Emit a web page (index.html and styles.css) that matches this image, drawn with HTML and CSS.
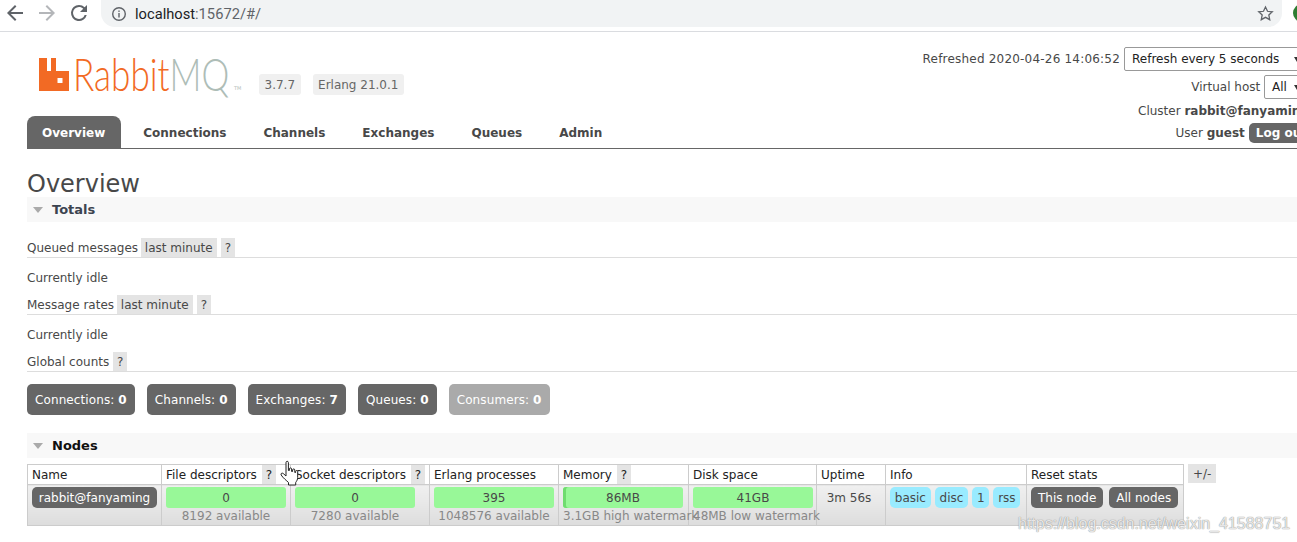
FILE: index.html
```html
<!DOCTYPE html>
<html lang="en">
<head>
  <meta charset="UTF-8">
  <title>RabbitMQ Management</title>
  <link rel="stylesheet" href="styles.css">
</head>
<body>
  <div class="browser-bar">
    <svg class="nav-icon" viewBox="0 0 24 24"><path fill="#5f6368" d="M20 11H7.83l5.59-5.59L12 4l-8 8 8 8 1.41-1.41L7.83 13H20z"/></svg>
    <svg class="nav-icon" viewBox="0 0 24 24"><path fill="#b4b6b9" d="M12 4l-1.41 1.41L16.17 11H4v2h12.17l-5.58 5.59L12 20l8-8z"/></svg>
    <svg class="nav-icon" viewBox="0 0 24 24"><path fill="#5f6368" d="M17.65 6.35A7.96 7.96 0 0 0 12 4a8 8 0 1 0 7.73 10h-2.08A6 6 0 1 1 12 6c1.66 0 3.14.69 4.22 1.78L13 11h7V4z"/></svg>
    <div class="url-pill">
      <svg class="info-icon" viewBox="0 0 16 16"><circle cx="8" cy="8" r="6.3" fill="none" stroke="#5f6368" stroke-width="1.4"/><rect x="7.3" y="7" width="1.4" height="4.5" fill="#5f6368"/><rect x="7.3" y="4.5" width="1.4" height="1.4" fill="#5f6368"/></svg>
      <span class="url-host">localhost</span><span class="url-rest">:15672/#/</span>
      <svg class="star-icon" viewBox="0 0 16 16"><path fill="none" stroke="#5f6368" stroke-width="1.2" d="M8 1.8l1.9 4.1 4.5.5-3.3 3 .9 4.4L8 11.6l-4 2.2.9-4.4-3.3-3 4.5-.5z"/></svg>
    </div>
    <div class="avatar"></div>
  </div>

  <div class="page">
    <div class="header">
      <div class="logo-row">
        <div class="logo">
          <svg class="logo-mark" viewBox="0 0 30 33"><path fill="#f26a24" fill-rule="evenodd" d="M0 0h8v13h4V0h5v13h13v20H0zM18.500 20v5h5v-5z"/></svg>
          <div class="logo-text"><span class="logo-rabbit">Rabbit</span><span class="logo-mq">MQ</span></div>
          <span class="logo-tm">TM</span>
        </div>
        <span class="version">3.7.7</span>
        <span class="version">Erlang 21.0.1</span>
      </div>
      <div class="login">
        <div class="login-row login-refresh">Refreshed 2020-04-26 14:06:52 <div class="fake-select refresh-select">Refresh every 5 seconds<i class="select-arrow"></i></div></div>
        <div class="login-row login-vhost">Virtual host <div class="fake-select vhost-select">All<i class="select-arrow"></i></div></div>
        <div class="login-row login-cluster">Cluster <b>rabbit@fanyaming</b></div>
        <div class="login-row login-user">User <b>guest</b> <span class="logout">Log out</span></div>
      </div>
    </div>

    <ul class="tabs">
      <li class="tab active">Overview</li>
      <li class="tab">Connections</li>
      <li class="tab">Channels</li>
      <li class="tab">Exchanges</li>
      <li class="tab">Queues</li>
      <li class="tab">Admin</li>
    </ul>

    <h1>Overview</h1>

    <div class="section-head totals-head"><i class="triangle"></i>Totals</div>

    <div class="sub-head first">Queued messages <span class="tag">last minute</span><span class="tag help">?</span></div>
    <p class="idle">Currently idle</p>
    <div class="sub-head">Message rates <span class="tag">last minute</span><span class="tag help">?</span></div>
    <p class="idle">Currently idle</p>
    <div class="sub-head">Global counts <span class="tag help">?</span></div>

    <div class="counts">
      <div class="count">Connections: <b>0</b></div>
      <div class="count">Channels: <b>0</b></div>
      <div class="count">Exchanges: <b>7</b></div>
      <div class="count">Queues: <b>0</b></div>
      <div class="count faded">Consumers: <b>0</b></div>
    </div>

    <div class="section-head nodes-head"><i class="triangle"></i>Nodes</div>

    <div class="nodes">
      <table>
        <colgroup>
          <col class="c-name"><col class="c-file"><col class="c-socket"><col class="c-erl"><col class="c-mem"><col class="c-disk"><col class="c-up"><col class="c-info"><col class="c-reset">
        </colgroup>
        <thead>
          <tr>
            <th>Name</th>
            <th>File descriptors <span class="tag help">?</span></th>
            <th>Socket descriptors <span class="tag help">?</span></th>
            <th>Erlang processes</th>
            <th>Memory <span class="tag help">?</span></th>
            <th>Disk space</th>
            <th>Uptime</th>
            <th>Info</th>
            <th>Reset stats</th>
          </tr>
        </thead>
        <tbody>
          <tr>
            <td><span class="pill node-name">rabbit@fanyaming</span></td>
            <td><div class="bar">0</div><div class="sub">8192 available</div></td>
            <td><div class="bar">0</div><div class="sub">7280 available</div></td>
            <td><div class="bar">395</div><div class="sub">1048576 available</div></td>
            <td><div class="bar bar-mem">86MB</div><div class="sub left">3.1GB high watermark</div></td>
            <td><div class="bar">41GB</div><div class="sub left">48MB low watermark</div></td>
            <td class="uptime">3m 56s</td>
            <td><div class="info-tags"><span class="info-tag">basic</span><span class="info-tag">disc</span><span class="info-tag">1</span><span class="info-tag">rss</span></div></td>
            <td><div class="reset-btns"><span class="pill">This node</span><span class="pill">All nodes</span></div></td>
          </tr>
        </tbody>
      </table>
      <span class="tag plus-minus">+/-</span>
    </div>
  </div>

  <svg class="hand-cursor" viewBox="0 0 20 26"><path fill="#fff" stroke="#222" stroke-width="1" stroke-linejoin="round" d="M6 2c0-1.600 2.400-1.600 2.400 0v8l1 0V8.500c0-1.400 2.200-1.400 2.200 0V11l1 0V9.500c0-1.400 2.200-1.400 2.200 0V12l.8 0v-1c0-1.300 2.100-1.300 2.100 0v6c0 2-1 3.500-2 5v2.500H8.500V22C6.500 20 3 17.500 1.200 14.500c-.8-1.400.8-2.500 2-1.500L6 15.500z"/></svg>
  <div class="watermark">https://blog.csdn.net/weixin_41588751</div>
</body>
</html>
```

FILE: styles.css
```css
html, body {
  margin: 0;
  height: 542px;
  overflow: hidden;
}

body {
  position: relative;
  background: #fff;
  color: #484848;
  font-family: "DejaVu Sans", Verdana, sans-serif;
  font-size: 12px;
}

/* browser chrome */
.browser-bar {
  display: flex;
  align-items: flex-start;
  height: 31px;
  border-bottom: 1px solid #dadce0;
  padding-left: 3px;
}

.nav-icon {
  width: 24px;
  height: 24px;
  margin: 1px 8px 0 0;
}

.url-pill {
  display: flex;
  align-items: center;
  flex: 1;
  height: 27px;
  margin-left: 2px;
  padding: 0 8px 0 10px;
  background: #f1f3f4;
  border-radius: 0 0 14px 14px;
  font-family: "Roboto", sans-serif;
  font-size: 14.7px;
}

.info-icon { width: 16px; height: 16px; margin-right: 8px; }
.url-host { color: #202124; }
.url-rest { color: #5f6368; }
.star-icon { width: 17px; height: 17px; margin-left: auto; }

.avatar {
  flex: none;
  width: 18px;
  height: 18px;
  margin: 4px -14px 0 11px;
  border-radius: 50%;
  background: #2e7d32;
}

/* page */
.page { padding-left: 27px; }

.header {
  display: flex;
  justify-content: space-between;
  height: 84px;
  margin-right: -17px;
}

.logo-row {
  display: flex;
  align-items: flex-start;
  padding-top: 26px;
}

.logo {
  position: relative;
  display: flex;
  width: 232px;
  padding-left: 12px;
  box-sizing: border-box;
}

.logo-mark { flex: none; width: 30px; height: 33px; }

.logo-text {
  margin-left: 4px;
  font-family: "Lato", sans-serif;
  font-weight: 300;
  font-size: 45px;
  line-height: 33px;
  white-space: nowrap;
  transform: scaleX(0.78);
  transform-origin: left top;
}

.logo-rabbit { color: #f26a24; }
.logo-mq { color: #aebdb7; }

.logo-tm {
  position: absolute;
  left: 207px;
  top: 27px;
  font-size: 5px;
  color: #b5c0bb;
}

.version {
  margin-top: 16px;
  padding: 0 5.5px;
  height: 21px;
  line-height: 22px;
  background: #f0f0f0;
  border-radius: 3px;
  color: #666;
}

.version + .version { margin-left: 12px; }

.login { width: 500px; padding-top: 14px; }

.login-row {
  display: flex;
  justify-content: flex-end;
  align-items: center;
  white-space: pre;
}

.login-refresh { height: 24px; padding-top: 1px; letter-spacing: 0.2px; }
.login-vhost { height: 24px; margin-top: 4px; }
.login-cluster { height: 18px; margin: 3px 5px 0 0; }
.login-user { height: 20px; margin-top: 3px; }

.fake-select {
  position: relative;
  box-sizing: border-box;
  height: 24px;
  line-height: 22px;
  padding-left: 7px;
  border: 1px solid #999;
  border-radius: 2px;
  background: #fff;
  color: #222;
  letter-spacing: 0;
}

.refresh-select { width: 190px; margin-top: -1px; }
.vhost-select { width: 50px; }

.select-arrow {
  position: absolute;
  right: 13px;
  top: 9px;
  border-left: 3.5px solid transparent;
  border-right: 3.5px solid transparent;
  border-top: 5px solid #333;
}

.logout {
  margin-left: 4px;
  padding: 0 7px;
  height: 20px;
  line-height: 20px;
  background: #666;
  color: #fff;
  font-weight: bold;
  border-radius: 5px;
}

.tabs {
  display: flex;
  gap: 7px;
  height: 32px;
  margin: 0;
  padding: 0;
  list-style: none;
  border-bottom: 1px solid #666;
}

.tab {
  padding: 0 15px;
  line-height: 34px;
  color: #484848;
  font-weight: bold;
  border-radius: 8px 8px 0 0;
}

.tab.active { padding-right: 16px; background: #666; color: #fff; }

h1 {
  margin: 18px 0 0;
  height: 30px;
  font-size: 24px;
  line-height: 34px;
  font-weight: normal;
  color: #484848;
}

.section-head {
  display: flex;
  align-items: center;
  height: 25px;
  padding-left: 6px;
  background: #f8f8f8;
  font-size: 13px;
  font-weight: bold;
  color: #3c4450;
}

.nodes-head { margin-top: 18px; color: #111; }

.triangle {
  width: 0;
  height: 0;
  margin-right: 9px;
  border-left: 5.5px solid transparent;
  border-right: 5.5px solid transparent;
  border-top: 6px solid #aaa;
}

.sub-head {
  display: flex;
  align-items: center;
  height: 19px;
  border-bottom: 1px solid #ddd;
  white-space: pre;
}

.sub-head.first { margin-top: 16px; }

.tag {
  display: inline-block;
  height: 19px;
  line-height: 20px;
  padding: 0 4px;
  background: #e4e4e4;
}

.help { margin-left: 4px; padding: 0 4px; }

.sub-head .tag:first-of-type { margin-left: -1px; }
.sub-head .help:first-of-type { margin-left: 0; }

.idle {
  margin: 0;
  height: 37px;
  line-height: 40px;
}

.counts {
  display: flex;
  gap: 12px;
  margin-top: 12px;
}

.count {
  height: 31px;
  line-height: 32px;
  padding: 0 8px;
  background: #666;
  color: #fff;
  border-radius: 5px;
  letter-spacing: 0.1px;
}

.count.faded { background: #aaa; }

.nodes {
  display: flex;
  align-items: flex-start;
  margin-top: 6px;
}

table {
  flex: none;
  table-layout: fixed;
  width: 1156px;
  border-collapse: collapse;
}

.c-name { width: 134px; }
.c-file { width: 129px; }
.c-socket { width: 139px; }
.c-erl { width: 129px; }
.c-mem { width: 130px; }
.c-disk { width: 128px; }
.c-up { width: 69px; }
.c-info { width: 141px; }
.c-reset { width: 157px; }

th {
  height: 18px;
  padding: 1px 0 0 4px;
  border: 1px solid #ccc;
  background: #fff;
  color: #222;
  font-weight: normal;
  line-height: 18px;
  text-align: left;
  white-space: nowrap;
}

th .help { margin: -1px 0 0 1px; vertical-align: top; }

td {
  height: 38px;
  padding: 2px 4px 0;
  border: 1px solid #ccc;
  background: linear-gradient(#f0f0f0, #ddd);
  vertical-align: top;
  text-align: center;
  white-space: nowrap;
}

.pill {
  display: inline-block;
  height: 21px;
  line-height: 22px;
  padding: 0 7px;
  background: #666;
  color: #fff;
  border-radius: 5px;
}

.node-name { width: 125px; box-sizing: border-box; padding: 0; }

.bar {
  width: 120px;
  height: 21px;
  line-height: 22px;
  background: #98f898;
  border-radius: 3px;
}

.bar-mem { box-shadow: inset 3px 0 #6fdc6f; }

.sub {
  width: 120px;
  height: 15px;
  padding-top: 1px;
  line-height: 15px;
  color: #888;
}

.sub.left { text-align: left; }

.uptime { padding: 2px 8px 0 4px; line-height: 22px; }

.info-tags, .reset-btns {
  display: flex;
  gap: 4px;
}

.info-tag {
  height: 21px;
  line-height: 22px;
  padding: 0 4.8px;
  background: #99ebff;
  border-radius: 5px;
}

.reset-btns { gap: 6px; }

.plus-minus { margin-left: 4px; padding: 0 5px; }

/* things on top of the page */
.hand-cursor {
  position: absolute;
  left: 280px;
  top: 460px;
  width: 20px;
  height: 27px;
}

.watermark {
  position: absolute;
  left: 1018px;
  top: 515px;
  font-family: "Liberation Sans", sans-serif;
  font-size: 16px;
  color: rgba(255, 255, 255, 0.8);
  text-shadow: 0 0 1px #888, 0 0 1px #aaa;
  white-space: nowrap;
}
```
